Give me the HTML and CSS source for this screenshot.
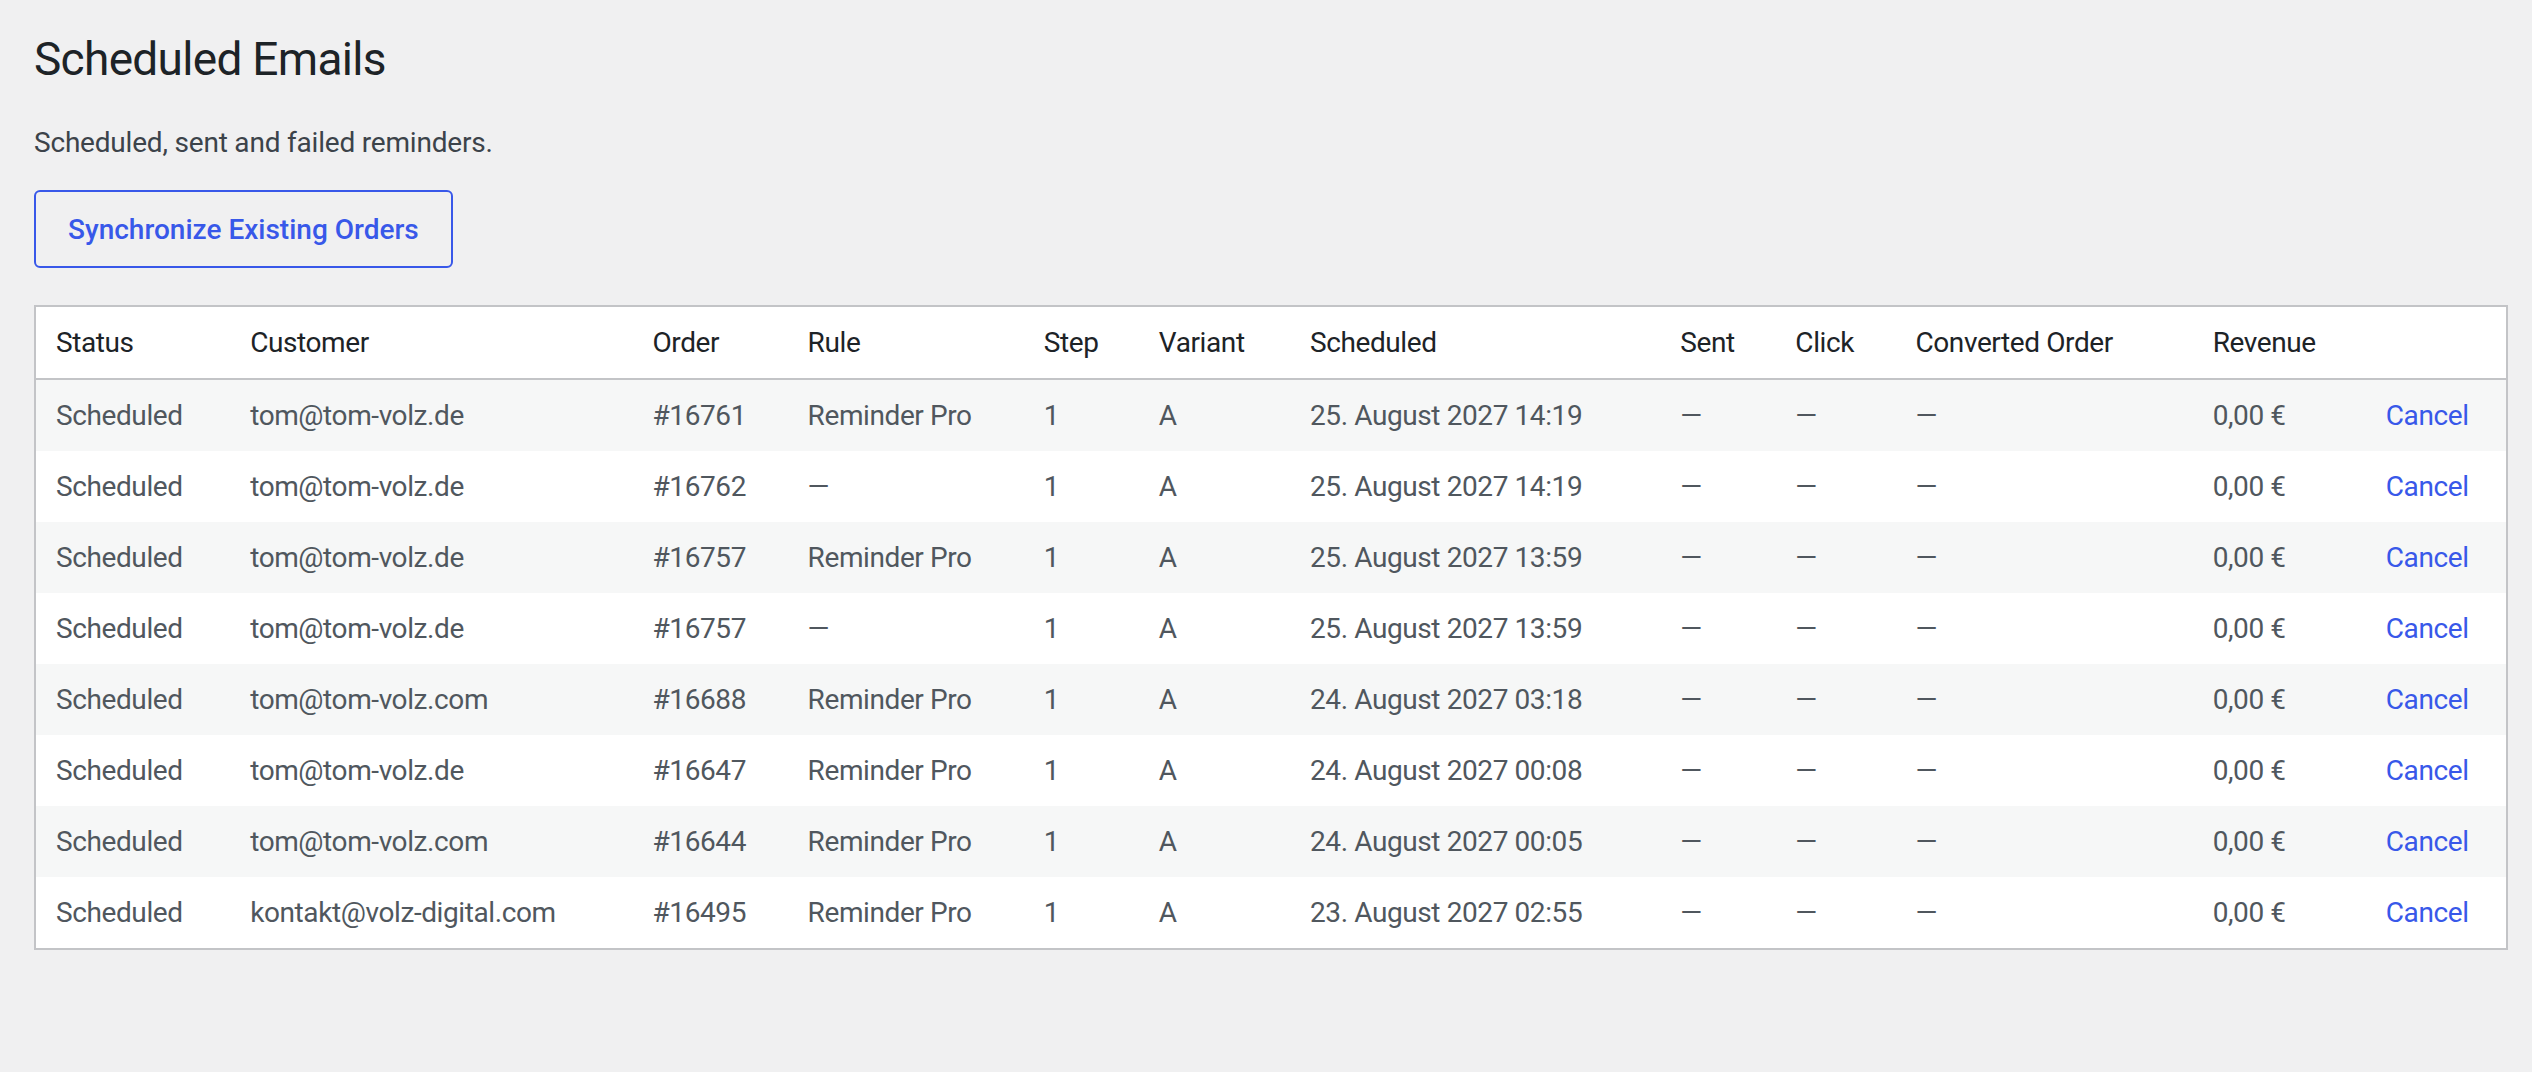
FILE: index.html
```html
<!DOCTYPE html>
<html lang="en">
<head>
  <meta charset="UTF-8" />
  <meta name="viewport" content="width=device-width, initial-scale=1.0"/>
  <title>Scheduled Emails</title>
  <link rel="stylesheet" href="styles.css">
</head>
<body>
  <div class="wrap">
    <h1>Scheduled Emails</h1>
    <p class="intro">Scheduled, sent and failed reminders.</p>
    <button class="sync">Synchronize Existing Orders</button>

    <table class="emails">
      <colgroup>
        <col class="c-status">
        <col class="c-customer">
        <col class="c-order">
        <col class="c-rule">
        <col class="c-step">
        <col class="c-variant">
        <col class="c-scheduled">
        <col class="c-sent">
        <col class="c-click">
        <col class="c-converted">
        <col class="c-revenue">
        <col class="c-action">
      </colgroup>
      <thead>
        <tr>
          <th>Status</th>
          <th>Customer</th>
          <th>Order</th>
          <th>Rule</th>
          <th>Step</th>
          <th>Variant</th>
          <th>Scheduled</th>
          <th>Sent</th>
          <th>Click</th>
          <th>Converted Order</th>
          <th>Revenue</th>
          <th></th>
        </tr>
      </thead>
      <tbody>
        <tr>
          <td>Scheduled</td><td>tom@tom-volz.de</td><td>#16761</td><td>Reminder Pro</td><td>1</td><td>A</td>
          <td>25. August 2027 14:19</td><td>—</td><td>—</td><td>—</td><td>0,00 €</td><td><a href="#">Cancel</a></td>
        </tr>
        <tr>
          <td>Scheduled</td><td>tom@tom-volz.de</td><td>#16762</td><td>—</td><td>1</td><td>A</td>
          <td>25. August 2027 14:19</td><td>—</td><td>—</td><td>—</td><td>0,00 €</td><td><a href="#">Cancel</a></td>
        </tr>
        <tr>
          <td>Scheduled</td><td>tom@tom-volz.de</td><td>#16757</td><td>Reminder Pro</td><td>1</td><td>A</td>
          <td>25. August 2027 13:59</td><td>—</td><td>—</td><td>—</td><td>0,00 €</td><td><a href="#">Cancel</a></td>
        </tr>
        <tr>
          <td>Scheduled</td><td>tom@tom-volz.de</td><td>#16757</td><td>—</td><td>1</td><td>A</td>
          <td>25. August 2027 13:59</td><td>—</td><td>—</td><td>—</td><td>0,00 €</td><td><a href="#">Cancel</a></td>
        </tr>
        <tr>
          <td>Scheduled</td><td>tom@tom-volz.com</td><td>#16688</td><td>Reminder Pro</td><td>1</td><td>A</td>
          <td>24. August 2027 03:18</td><td>—</td><td>—</td><td>—</td><td>0,00 €</td><td><a href="#">Cancel</a></td>
        </tr>
        <tr>
          <td>Scheduled</td><td>tom@tom-volz.de</td><td>#16647</td><td>Reminder Pro</td><td>1</td><td>A</td>
          <td>24. August 2027 00:08</td><td>—</td><td>—</td><td>—</td><td>0,00 €</td><td><a href="#">Cancel</a></td>
        </tr>
        <tr>
          <td>Scheduled</td><td>tom@tom-volz.com</td><td>#16644</td><td>Reminder Pro</td><td>1</td><td>A</td>
          <td>24. August 2027 00:05</td><td>—</td><td>—</td><td>—</td><td>0,00 €</td><td><a href="#">Cancel</a></td>
        </tr>
        <tr>
          <td>Scheduled</td><td>kontakt@volz-digital.com</td><td>#16495</td><td>Reminder Pro</td><td>1</td><td>A</td>
          <td>23. August 2027 02:55</td><td>—</td><td>—</td><td>—</td><td>0,00 €</td><td><a href="#">Cancel</a></td>
        </tr>
      </tbody>
    </table>
  </div>
</body>
</html>
```

FILE: styles.css
```css
body {
  margin: 0;
  background-color: #f0f0f1;
  font-family: Roboto, Inter, "Liberation Sans", sans-serif;
  color: #3c434a;
}

.wrap {
  padding: 29px 24px 0 34px;
}

h1 {
  margin: 0;
  font-size: 46px;
  line-height: 60px;
  font-weight: 400;
  color: #1d2327;
  letter-spacing: -0.7px;
}

.intro {
  margin: 34px 0 0;
  font-size: 28px;
  line-height: 40px;
  letter-spacing: -0.2px;
}

.sync {
  display: block;
  margin-top: 27px;
  height: 78px;
  padding: 0 32px;
  background: transparent;
  border: 2px solid #3858e9;
  border-radius: 6px;
  color: #3858e9;
  font-family: inherit;
  font-size: 28px;
  font-weight: 500;
  cursor: pointer;
}

/* table */
.emails {
  margin-top: 37px;
  width: 100%;
  table-layout: fixed;
  border-collapse: collapse;
  background-color: white;
  border: 2px solid #c3c4c7;
  font-size: 28px;
  letter-spacing: -0.4px;
}

.c-status { width: 195px; }
.c-customer { width: 402px; }
.c-order { width: 155px; }
.c-rule { width: 236px; }
.c-step { width: 115px; }
.c-variant { width: 151px; }
.c-scheduled { width: 370px; }
.c-sent { width: 115px; }
.c-click { width: 120px; }
.c-converted { width: 297px; }
.c-revenue { width: 173px; }
.c-action { width: 141px; }

.emails th {
  height: 71px;
  padding: 0 20px;
  text-align: left;
  font-weight: 400;
  color: #1d2327;
  border-bottom: 2px solid #c3c4c7;
  white-space: nowrap;
}

.emails td {
  height: 71px;
  padding: 0 20px;
  color: #50575e;
  white-space: nowrap;
}

.emails tbody tr:nth-child(odd) {
  background-color: #f6f7f7;
}

.emails a {
  color: #3858e9;
  text-decoration: none;
}
```
